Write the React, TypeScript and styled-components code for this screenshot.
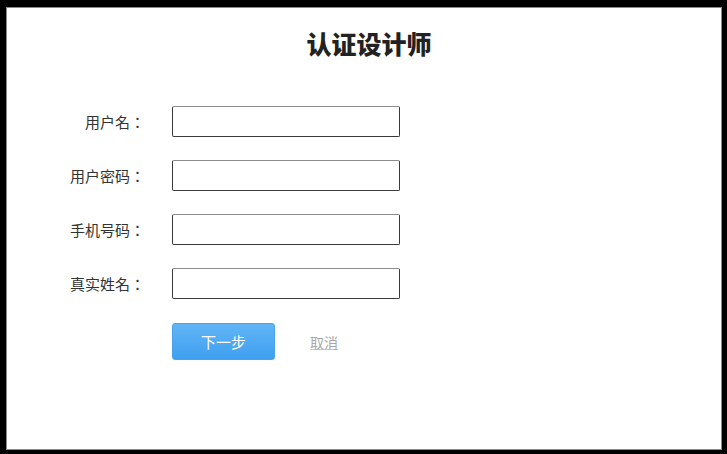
import React from 'react';
import styled, { createGlobalStyle } from 'styled-components';

const fields = ['用户名：', '用户密码：', '手机号码：', '真实姓名：'];

function App() {
  return (
    <>
      <GlobalStyle />
      <Frame>
        <Title>认证设计师</Title>
        <Form onSubmit={(e) => e.preventDefault()}>
          {fields.map((label) => (
            <React.Fragment key={label}>
              <Label>{label}</Label>
              <Input type="text" />
            </React.Fragment>
          ))}
          <Actions>
            <NextButton type="submit">下一步</NextButton>
            <CancelLink href="#">取消</CancelLink>
          </Actions>
        </Form>
      </Frame>
    </>
  );
}

const GlobalStyle = createGlobalStyle`
  html, body {
    margin: 0;
    padding: 0;
    background: #fff;
    font-family: "Noto Sans CJK SC", "Noto Sans", sans-serif;
  }
`;

const Frame = styled.div`
  box-sizing: border-box;
  width: 727px;
  height: 454px;
  border-style: solid;
  border-color: #000;
  border-width: 7px 5px 4px 6px;
  box-shadow: inset 0 0 0 1px #8a8a8a;
  background: #fff;
  padding-top: 18px;
`;

const Title = styled.h1`
  margin: 0;
  padding-left: 10px;
  text-align: center;
  font-size: 25px;
  line-height: 36px;
  font-weight: 900;
  color: #222;
`;

const Form = styled.form`
  display: grid;
  grid-template-columns: 139px 228px;
  column-gap: 27px;
  row-gap: 23px;
  align-items: center;
  margin-top: 45px;
`;

const Label = styled.label`
  text-align: right;
  font-family: "Noto Sans CJK JP", "Noto Sans CJK SC", sans-serif;
  font-size: 15px;
  color: #333;
  white-space: nowrap;
`;

const Input = styled.input`
  box-sizing: border-box;
  width: 228px;
  height: 31px;
  margin: 0;
  border: 1px solid #3a3a3a;
  border-top-color: #8c8c8c;
  border-radius: 2px;
  background: #fff;
  outline: none;
  padding: 0 6px;
`;

const Actions = styled.div`
  grid-column: 2;
  display: flex;
  align-items: center;
  gap: 35px;
  margin-top: 1px;
`;

const NextButton = styled.button`
  width: 103px;
  height: 37px;
  border: 1px solid #4aa3ea;
  border-radius: 3px;
  background: linear-gradient(#62b5f6, #3f9ff0);
  color: #fff;
  font-family: "Noto Sans CJK SC", sans-serif;
  font-size: 15px;
  cursor: pointer;
`;

const CancelLink = styled.a`
  color: #a8a8a8;
  font-size: 14px;
  text-decoration: underline;
  text-decoration-color: #c8c8c8;
`;

export default App;
